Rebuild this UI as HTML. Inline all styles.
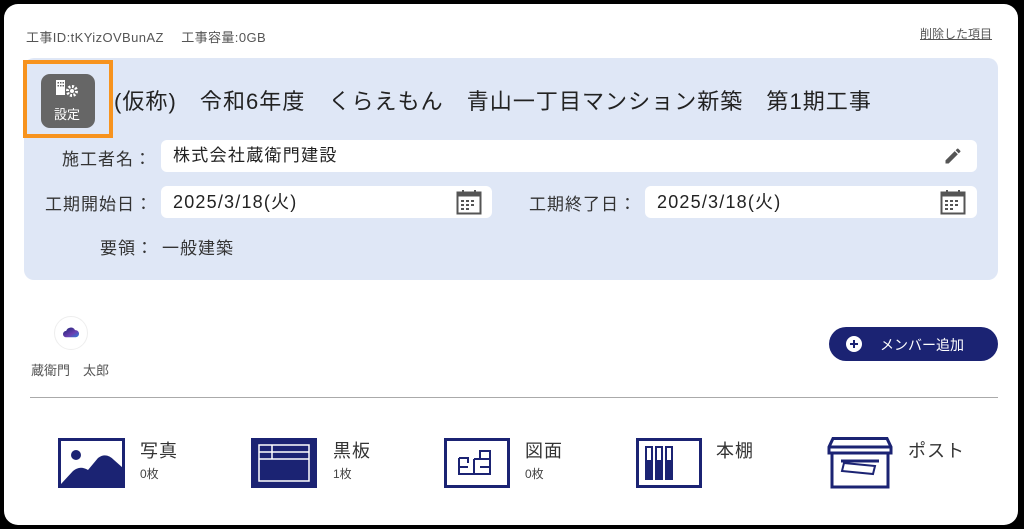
<!DOCTYPE html>
<html><head><meta charset="utf-8"><style>
*{margin:0;padding:0;box-sizing:border-box}
body{width:1024px;height:529px;background:#000;font-family:"Liberation Sans","Noto Sans CJK JP",sans-serif;position:relative;overflow:hidden;color:#222}
.card{position:absolute;left:4px;top:4px;width:1014px;height:521px;background:#fff;border-radius:14px}
.a{position:absolute;white-space:nowrap}
.panel{position:absolute;left:24px;top:58px;width:974px;height:222px;background:#dfe7f6;border-radius:10px}
.inp{position:absolute;background:#fff;border-radius:6px;height:32px;font-size:17px;line-height:32px;padding-left:12px;color:#222;letter-spacing:1.3px}
.dt{font-size:18px;letter-spacing:1.2px}
.lbl{font-size:17px;color:#333;letter-spacing:1px}
.nv{color:#1b2373}
.t1{font-size:18px;color:#333;letter-spacing:1px}
.t2{font-size:12px;color:#444}
</style></head><body>
<div class="card"></div>
<div class="a" style="left:26px;top:27px;font-size:13px;color:#555;letter-spacing:.4px">工事ID:tKYizOVBunAZ　 工事容量:0GB</div>
<div class="a" style="left:920px;top:25px;font-size:12px;color:#555;text-decoration:underline">削除した項目</div>
<div class="panel"></div>
<div class="a" style="left:23px;top:60px;width:90px;height:78px;border:4px solid #f7931e"></div>
<div class="a" style="left:41px;top:74px;width:54px;height:54px;background:#666;border-radius:9px"></div>
<svg class="a" style="left:55px;top:79px" width="26" height="20" viewBox="0 0 26 20"><rect x="1" y="1" width="9" height="15" fill="#fff"/><g fill="#666"><rect x="2.5" y="3" width="1.5" height="1.5"/><rect x="5" y="3" width="1.5" height="1.5"/><rect x="7.5" y="3" width="1.5" height="1.5"/><rect x="2.5" y="6" width="1.5" height="1.5"/><rect x="5" y="6" width="1.5" height="1.5"/><rect x="7.5" y="6" width="1.5" height="1.5"/></g><circle cx="17" cy="12" r="4.5" fill="none" stroke="#fff" stroke-width="3" stroke-dasharray="2 1.5"/><circle cx="17" cy="12" r="2" fill="#fff"/></svg>
<div class="a" style="left:54px;top:104px;font-size:13px;color:#fff">設定</div>
<div class="a" style="left:114px;top:84px;font-size:22px;color:#222;letter-spacing:1.05px">(仮称)　令和6年度　くらえもん　青山一丁目マンション新築　第1期工事</div>
<div class="a lbl" style="left:62px;top:145px">施工者名：</div>
<div class="inp" style="left:161px;top:140px;width:816px">株式会社蔵衛門建設</div>
<svg class="a" style="left:943px;top:146px" width="20" height="20" viewBox="0 0 24 24"><path d="M3 17.25V21h3.75L17.81 9.94l-3.75-3.75L3 17.25zM20.71 7.04a1 1 0 000-1.41l-2.34-2.34a1 1 0 00-1.41 0l-1.83 1.83 3.75 3.75 1.83-1.83z" fill="#555"/></svg>
<div class="a lbl" style="left:45px;top:190px">工期開始日：</div>
<div class="inp dt" style="left:161px;top:186px;width:331px">2025/3/18(火)</div>
<div class="a lbl" style="left:529px;top:190px">工期終了日：</div>
<div class="inp dt" style="left:645px;top:186px;width:332px">2025/3/18(火)</div>
<svg class="a" style="left:456px;top:189px" width="26" height="26" viewBox="0 0 26 26"><rect x="1.5" y="3.5" width="23" height="21" fill="none" stroke="#555" stroke-width="2"/><rect x="1.5" y="3.5" width="23" height="4" fill="#555"/><rect x="6" y="1" width="2" height="4" fill="#555"/><rect x="18" y="1" width="2" height="4" fill="#555"/><g fill="#555"><rect x="5" y="11" width="3" height="2"/><rect x="10" y="11" width="3" height="2"/><rect x="15" y="11" width="3" height="2"/><rect x="5" y="15" width="3" height="2"/><rect x="10" y="15" width="3" height="2"/><rect x="15" y="15" width="3" height="2"/><rect x="5" y="19" width="3" height="2"/><rect x="10" y="19" width="3" height="2"/></g></svg>
<svg class="a" style="left:940px;top:189px" width="26" height="26" viewBox="0 0 26 26"><rect x="1.5" y="3.5" width="23" height="21" fill="none" stroke="#555" stroke-width="2"/><rect x="1.5" y="3.5" width="23" height="4" fill="#555"/><rect x="6" y="1" width="2" height="4" fill="#555"/><rect x="18" y="1" width="2" height="4" fill="#555"/><g fill="#555"><rect x="5" y="11" width="3" height="2"/><rect x="10" y="11" width="3" height="2"/><rect x="15" y="11" width="3" height="2"/><rect x="5" y="15" width="3" height="2"/><rect x="10" y="15" width="3" height="2"/><rect x="15" y="15" width="3" height="2"/><rect x="5" y="19" width="3" height="2"/><rect x="10" y="19" width="3" height="2"/></g></svg>
<div class="a lbl" style="left:100px;top:234px">要領：</div>
<div class="a lbl" style="left:162px;top:234px">一般建築</div>
<div class="a" style="left:54px;top:316px;width:34px;height:34px;border-radius:50%;border:1px solid #eee;background:#fff"></div>
<svg class="a" style="left:63px;top:326px" width="16" height="13" viewBox="0 0 20 16"><defs><linearGradient id="g" x1="0" x2="1" y1="0" y2="1"><stop offset="0" stop-color="#1b2373"/><stop offset=".6" stop-color="#6a3fb0"/><stop offset="1" stop-color="#2b7fd8"/></linearGradient></defs><path d="M4 14a4 4 0 010-8 6 6 0 0111-1 4.5 4.5 0 011 9z" fill="url(#g)"/></svg>
<div class="a" style="left:31px;top:360px;font-size:13px;color:#555">蔵衛門　太郎</div>
<div class="a" style="left:829px;top:327px;width:169px;height:34px;background:#1b2373;border-radius:17px"></div>
<svg class="a" style="left:846px;top:336px" width="16" height="16" viewBox="0 0 16 16"><circle cx="8" cy="8" r="8" fill="#fff"/><path d="M8 4v8M4 8h8" stroke="#1b2373" stroke-width="2"/></svg>
<div class="a" style="left:880px;top:335px;font-size:14px;color:#fff">メンバー追加</div>
<div class="a" style="left:30px;top:397px;width:968px;height:1px;background:#aaa"></div>
<svg class="a" style="left:58px;top:438px" width="67" height="50" viewBox="0 0 67 50"><rect x="1.5" y="1.5" width="64" height="47" fill="none" stroke="#1b2373" stroke-width="3"/><circle cx="18" cy="17" r="5" fill="#1b2373"/><path d="M3 46L15 33Q22 27 30 32L40 20Q48 14 56 22L65 30V48H3z" fill="#1b2373"/></svg>
<div class="a t1 nv" style="left:140px;top:437px">写真</div><div class="a t2 nv" style="left:140px;top:465px">0枚</div>
<svg class="a" style="left:251px;top:438px" width="66" height="50" viewBox="0 0 66 50"><rect x="0" y="0" width="66" height="50" fill="#1b2373"/><g fill="none" stroke="#fff" stroke-width="1.5"><rect x="8" y="7" width="50" height="36"/><path d="M8 14H58M8 21H58M21 7V21"/></g></svg>
<div class="a t1 nv" style="left:333px;top:437px">黒板</div><div class="a t2 nv" style="left:333px;top:465px">1枚</div>
<svg class="a" style="left:444px;top:438px" width="66" height="50" viewBox="0 0 66 50"><rect x="1.5" y="1.5" width="63" height="47" fill="none" stroke="#1b2373" stroke-width="3"/><path d="M15 20V36H46V13H36V21H30 M15 20H24V25 M15 29H24 M30 21V36 M36 21H46 M36 29H46" fill="none" stroke="#1b2373" stroke-width="2"/></svg>
<div class="a t1 nv" style="left:525px;top:437px">図面</div><div class="a t2 nv" style="left:525px;top:465px">0枚</div>
<svg class="a" style="left:636px;top:438px" width="66" height="50" viewBox="0 0 66 50"><rect x="1.5" y="1.5" width="63" height="47" fill="none" stroke="#1b2373" stroke-width="3"/><g fill="#1b2373"><rect x="9" y="8" width="8" height="34"/><rect x="19" y="8" width="8" height="34"/><rect x="29" y="8" width="8" height="34"/></g><g fill="#fff"><rect x="11" y="10" width="4" height="12"/><rect x="21" y="10" width="4" height="12"/><rect x="31" y="10" width="4" height="12"/></g></svg>
<div class="a t1 nv" style="left:716px;top:437px">本棚</div>
<svg class="a" style="left:827px;top:437px" width="66" height="52" viewBox="0 0 66 52"><g fill="none" stroke="#1b2373" stroke-width="3"><path d="M6 1.5H60L64 10V16H2V10Z"/><path d="M5 16V50H61V16"/><path d="M2 10H64"/></g><path d="M14 24H52" stroke="#1b2373" stroke-width="3"/><path d="M17 26L48 29L46 37L15 34Z" fill="none" stroke="#1b2373" stroke-width="2"/></svg>
<div class="a t1 nv" style="left:908px;top:437px">ポスト</div>
</body></html>
